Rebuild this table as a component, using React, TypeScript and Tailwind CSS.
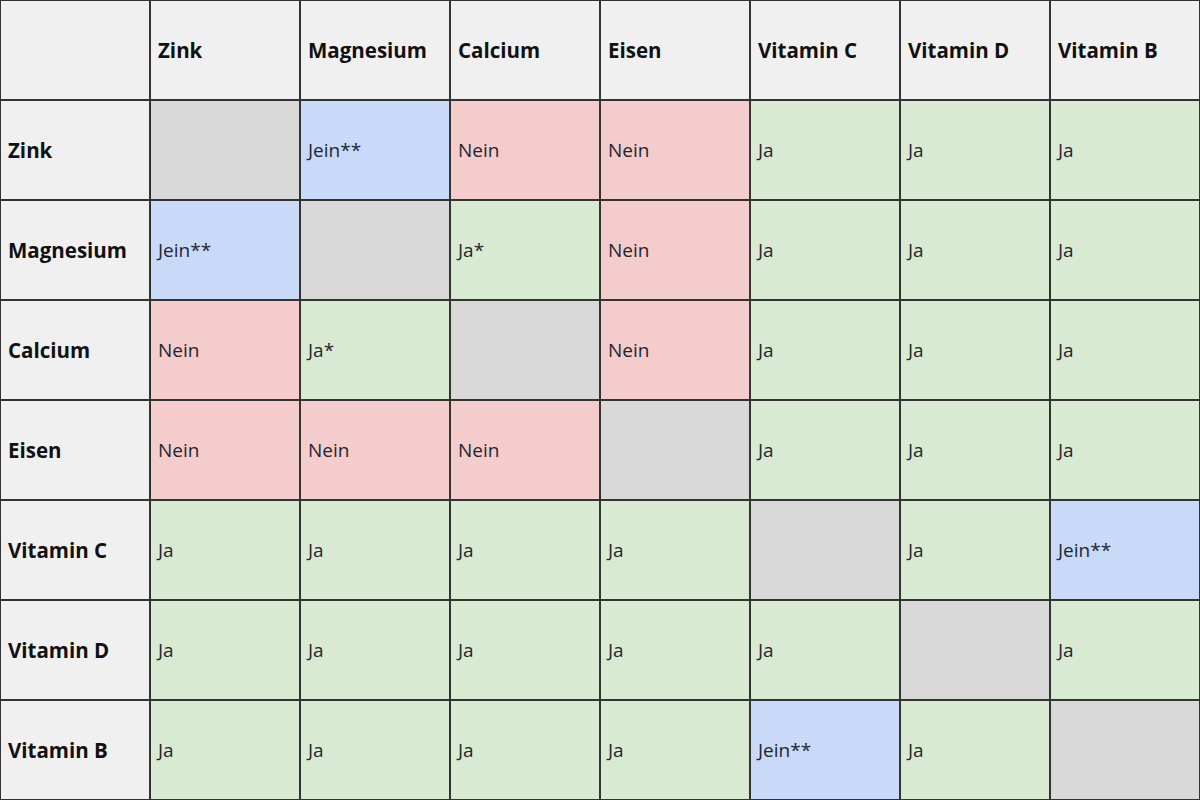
const cols = ["Zink", "Magnesium", "Calcium", "Eisen", "Vitamin C", "Vitamin D", "Vitamin B"];

// "-" marks the diagonal (same substance)
const rows: string[][] = [
  ["-", "Jein**", "Nein", "Nein", "Ja", "Ja", "Ja"],
  ["Jein**", "-", "Ja*", "Nein", "Ja", "Ja", "Ja"],
  ["Nein", "Ja*", "-", "Nein", "Ja", "Ja", "Ja"],
  ["Nein", "Nein", "Nein", "-", "Ja", "Ja", "Ja"],
  ["Ja", "Ja", "Ja", "Ja", "-", "Ja", "Jein**"],
  ["Ja", "Ja", "Ja", "Ja", "Ja", "-", "Ja"],
  ["Ja", "Ja", "Ja", "Ja", "Jein**", "Ja", "-"],
];

function cellBg(value: string) {
  if (value === "-") return "bg-[#d9d9d9]";
  if (value.startsWith("Jein")) return "bg-[#c9daf8]";
  if (value === "Nein") return "bg-[#f4cccc]";
  return "bg-[#d9ead3]";
}

export default function App() {
  return (
    <div
      className="w-[1200px] h-[800px] bg-[#333333] p-px grid grid-cols-[repeat(8,148px)] grid-rows-[repeat(8,98px)] gap-[2px]"
      style={{ fontFamily: '"Open Sans", "Noto Sans", sans-serif' }}
    >
      <div className="bg-[#f0f0f0]" />
      {cols.map((c) => (
        <div key={c} className="bg-[#f0f0f0] flex items-center px-[7px] text-[20.5px] font-bold text-[#111]">
          {c}
        </div>
      ))}
      {rows.map((row, i) => (
        <>
          <div key={`h-${i}`} className="bg-[#f0f0f0] flex items-center px-[7px] text-[20.5px] font-bold text-[#111]">
            {cols[i]}
          </div>
          {row.map((v, j) => (
            <div
              key={`${i}-${j}`}
              className={`${cellBg(v)} flex items-center px-[7px] text-[19px] text-[#1f2633]`}
            >
              {v === "-" ? "" : v}
            </div>
          ))}
        </>
      ))}
    </div>
  );
}
